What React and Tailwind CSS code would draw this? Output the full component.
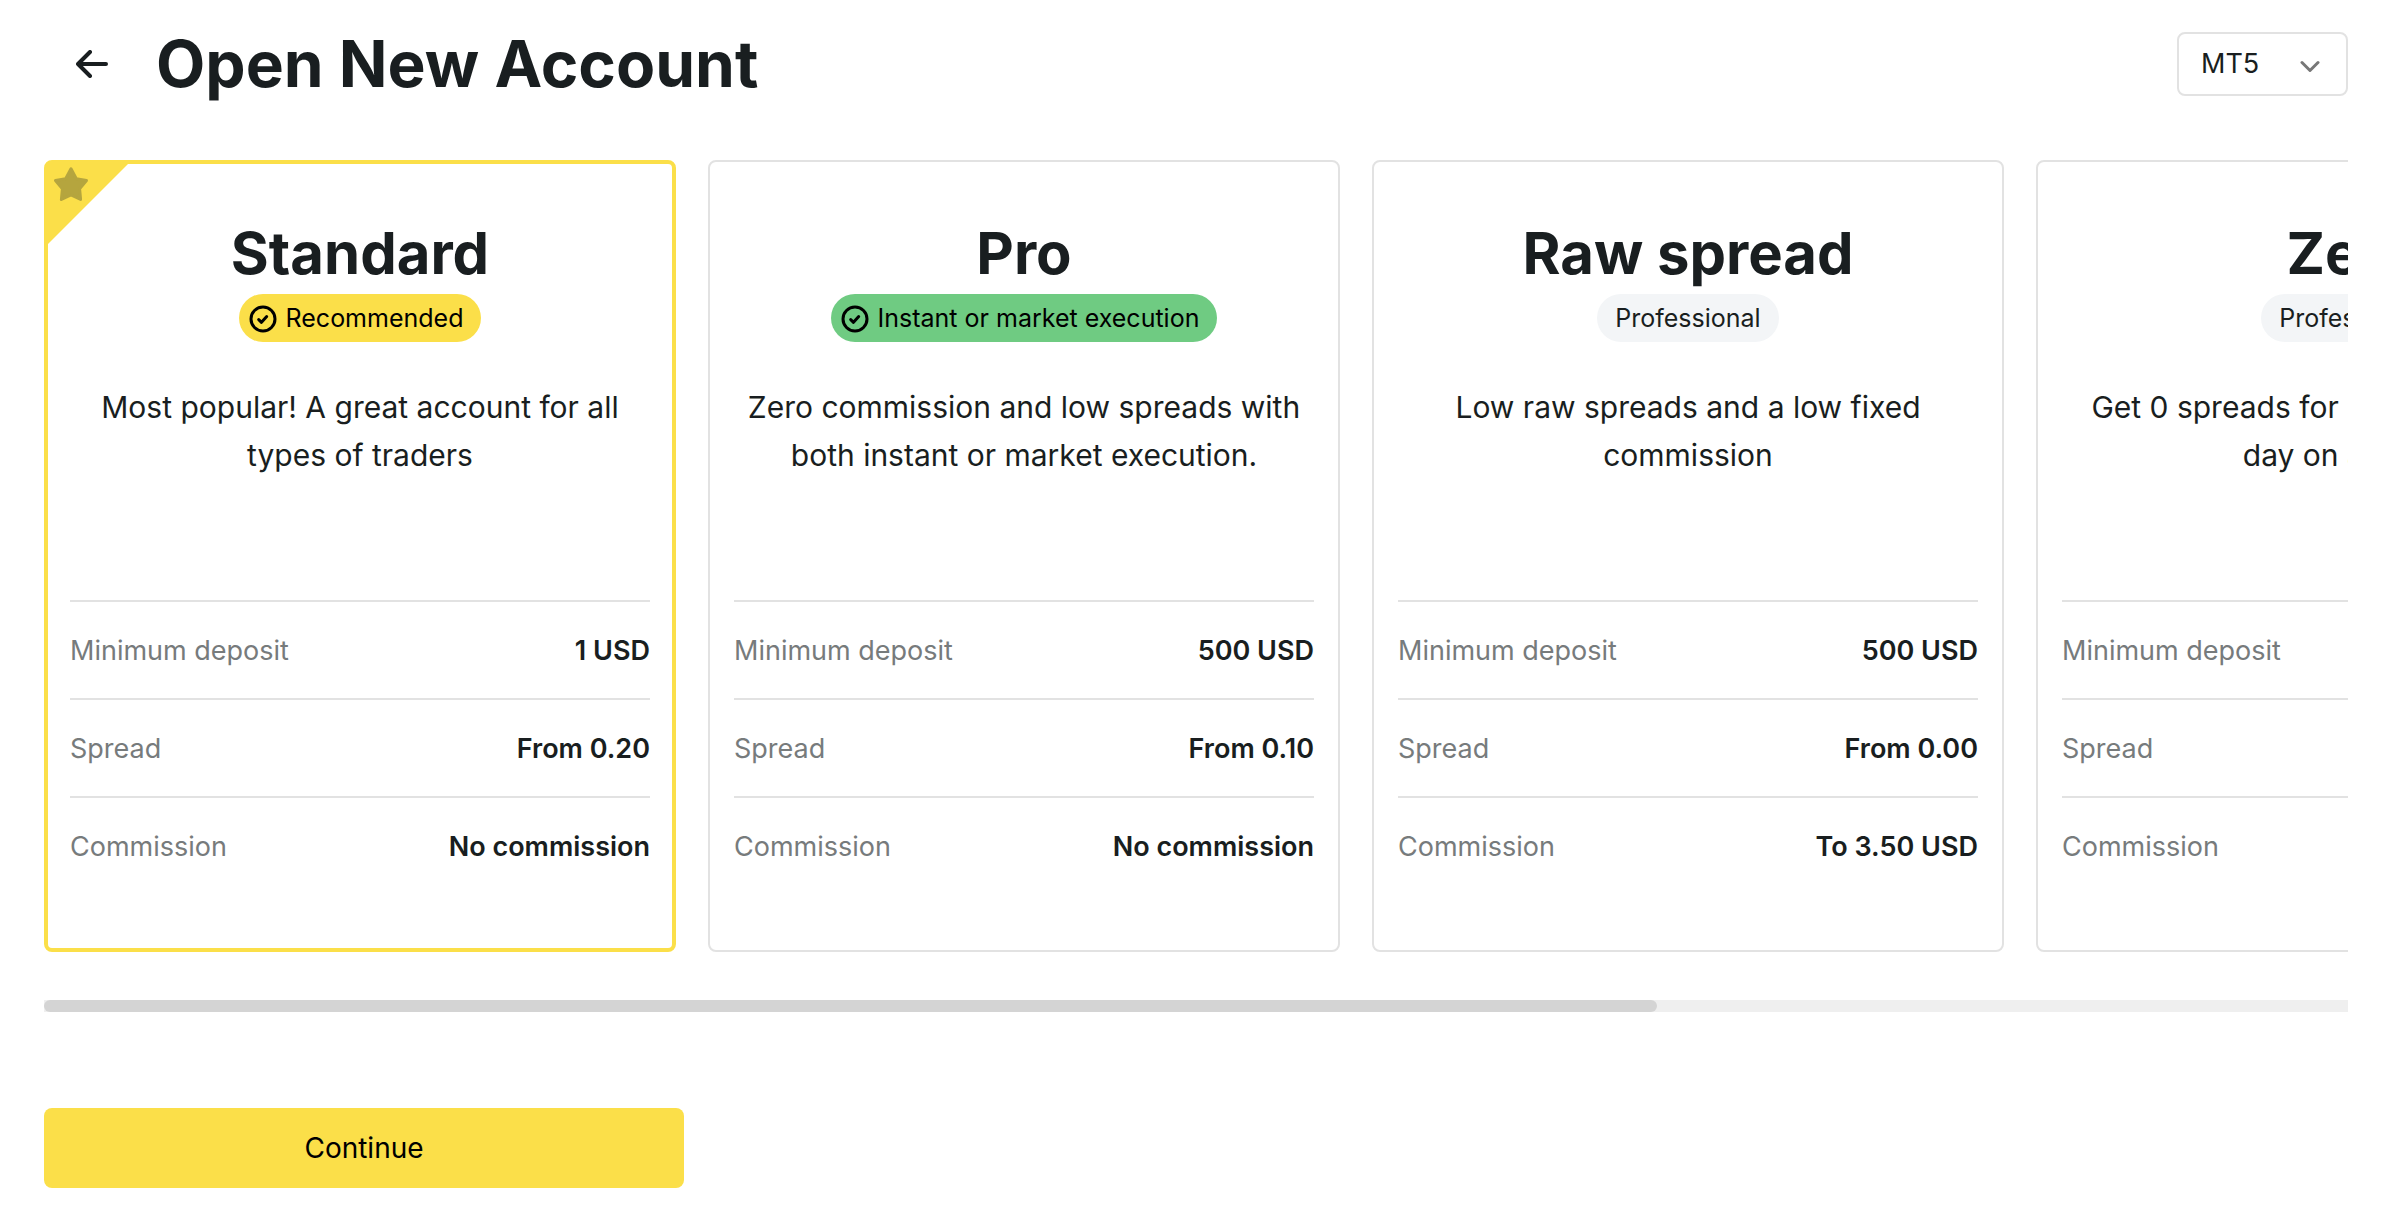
import React, { useState } from 'react';

// Account types shown in the carousel
const accounts = [
    {
        id: 'standard',
        name: 'Standard',
        badge: 'Recommended',
        tone: 'yellow',
        description: 'Most popular! A great account for all types of traders',
        deposit: '1 USD',
        spread: 'From 0.20',
        commission: 'No commission',
        starred: true,
    },
    {
        id: 'pro',
        name: 'Pro',
        badge: 'Instant or market execution',
        tone: 'green',
        description: 'Zero commission and low spreads with both instant or market execution.',
        deposit: '500 USD',
        spread: 'From 0.10',
        commission: 'No commission',
    },
    {
        id: 'raw-spread',
        name: 'Raw spread',
        badge: 'Professional',
        tone: 'gray',
        description: 'Low raw spreads and a low fixed commission',
        deposit: '500 USD',
        spread: 'From 0.00',
        commission: 'To 3.50 USD',
    },
    {
        id: 'zero',
        name: 'Zero',
        badge: 'Professional',
        tone: 'gray',
        description: 'Get 0 spreads for 95% of the trading day on average',
        deposit: '500 USD',
        spread: 'From 0.00',
        commission: 'From 0.05 USD',
    },
];

const badgeTones = {
    yellow: 'bg-[#fbdf49] pl-[10px] text-black',
    green: 'bg-[#6fcb82] pl-[10px] text-black',
    gray: 'bg-[#f3f5f7] pl-[18px] text-[#191e20]',
};

function ArrowLeftIcon() {
    return (
        <svg className="h-7 w-8" viewBox="0 0 32 28" fill="none" stroke="currentColor" strokeWidth="4" strokeLinecap="round" strokeLinejoin="round" aria-hidden="true">
            <path d="M30 14H2M14 2 2 14l12 12" />
        </svg>
    );
}

function CheckIcon() {
    return (
        <svg className="h-7 w-7" viewBox="0 0 28 28" fill="none" stroke="currentColor" strokeWidth="3" strokeLinecap="round" strokeLinejoin="round" aria-hidden="true">
            <circle cx="14" cy="14" r="12" />
            <path d="M9.7 14.6l2.8 2.7 5.2-5.8" />
        </svg>
    );
}

// Yellow corner with a star, sits over the top left of the card
function StarCorner() {
    return (
        <svg className="absolute top-0 left-0 h-20 w-20" viewBox="0 0 80 80" aria-hidden="true">
            <path d="M0 0H80L0 80Z" fill="#fbdf49" />
            <path
                d="M23 4.8 28.3 14.7 38.5 16.5 31.6 24.8 32.6 35.5 23 31 13.4 35.5 14.4 24.8 7.5 16.5 17.7 14.7Z"
                fill="#b5a53e"
                stroke="#b5a53e"
                strokeWidth="3"
                strokeLinejoin="round"
            />
        </svg>
    );
}

function Badge({ tone, children }) {
    return (
        <span className={`flex h-12 items-center gap-[9px] rounded-full pt-[2px] pr-[18px] text-[25px] whitespace-nowrap ${badgeTones[tone]}`}>
            {tone !== 'gray' && <CheckIcon />}
            {children}
        </span>
    );
}

function Row({ label, value }) {
    return (
        <div className="flex h-[98px] items-center justify-between border-t-2 border-[#e2e2e2] pt-[2px] text-[27px]">
            <dt className="text-[#777b7c]">{label}</dt>
            <dd className="font-semibold">{value}</dd>
        </div>
    );
}

function AccountCard({ account, selected, onSelect }) {
    return (
        <label
            className={`relative flex w-[632px] shrink-0 cursor-pointer flex-col rounded-lg ${
                selected ? 'border-4 border-[#fbdf49] px-[22px] pt-[54px] pb-[54px]' : 'border-2 border-[#e2e2e2] px-6 pt-14 pb-14'
            }`}
        >
            <input type="radio" name="account" value={account.id} checked={selected} onChange={onSelect} aria-label={account.name} className="sr-only" />
            {account.starred && <StarCorner />}
            <div className="flex flex-col items-center">
                <h2 className="text-[58px] leading-[70px] font-bold">{account.name}</h2>
                <div className="mt-[6px]">
                    <Badge tone={account.tone}>{account.badge}</Badge>
                </div>
            </div>
            <p className="mt-[41px] min-h-[217px] text-center text-[30px] leading-[48px]">{account.description}</p>
            <dl>
                <Row label="Minimum deposit" value={account.deposit} />
                <Row label="Spread" value={account.spread} />
                <Row label="Commission" value={account.commission} />
            </dl>
        </label>
    );
}

function Header() {
    return (
        <header className="flex items-center justify-between">
            <div className="flex items-center gap-12 pl-8">
                <button type="button" aria-label="Back" className="cursor-pointer">
                    <ArrowLeftIcon />
                </button>
                <h1 className="text-[64px] leading-[64px] font-bold">Open New Account</h1>
            </div>
            <div className="relative">
                <select aria-label="Platform" defaultValue="MT5" className="h-16 w-[171px] appearance-none rounded-lg border-2 border-[#e2e2e2] bg-white pl-[22px] text-[27px]">
                    <option>MT5</option>
                    <option>MT4</option>
                </select>
                <svg className="pointer-events-none absolute top-7 right-7 h-3 w-5" viewBox="0 0 20 12" fill="none" stroke="#777777" strokeWidth="3" strokeLinecap="round" strokeLinejoin="round" aria-hidden="true">
                    <path d="M2 2.5l8 8 8-8" />
                </svg>
            </div>
        </header>
    );
}

function App() {
    const [selected, setSelected] = useState('standard');

    return (
        <main className="min-h-screen bg-white pt-8 pr-[54px] pb-8 pl-11 font-['Inter',sans-serif] text-[#191e20]">
            <Header />

            <div className="mt-16 flex gap-8 overflow-x-auto [scrollbar-width:none]">
                {accounts.map((account) => (
                    <AccountCard
                        key={account.id}
                        account={account}
                        selected={selected === account.id}
                        onSelect={() => setSelected(account.id)}
                    />
                ))}
            </div>

            {/* Carousel scrollbar */}
            <div className="mt-12 h-3 bg-[#efefef]">
                <div className="h-3 w-[70%] rounded-full bg-[#d4d4d4]" />
            </div>

            <button type="button" className="mt-24 h-20 w-[640px] cursor-pointer rounded-lg bg-[#fbdf49] text-[28px] text-black">
                Continue
            </button>
        </main>
    );
}

export default App;
